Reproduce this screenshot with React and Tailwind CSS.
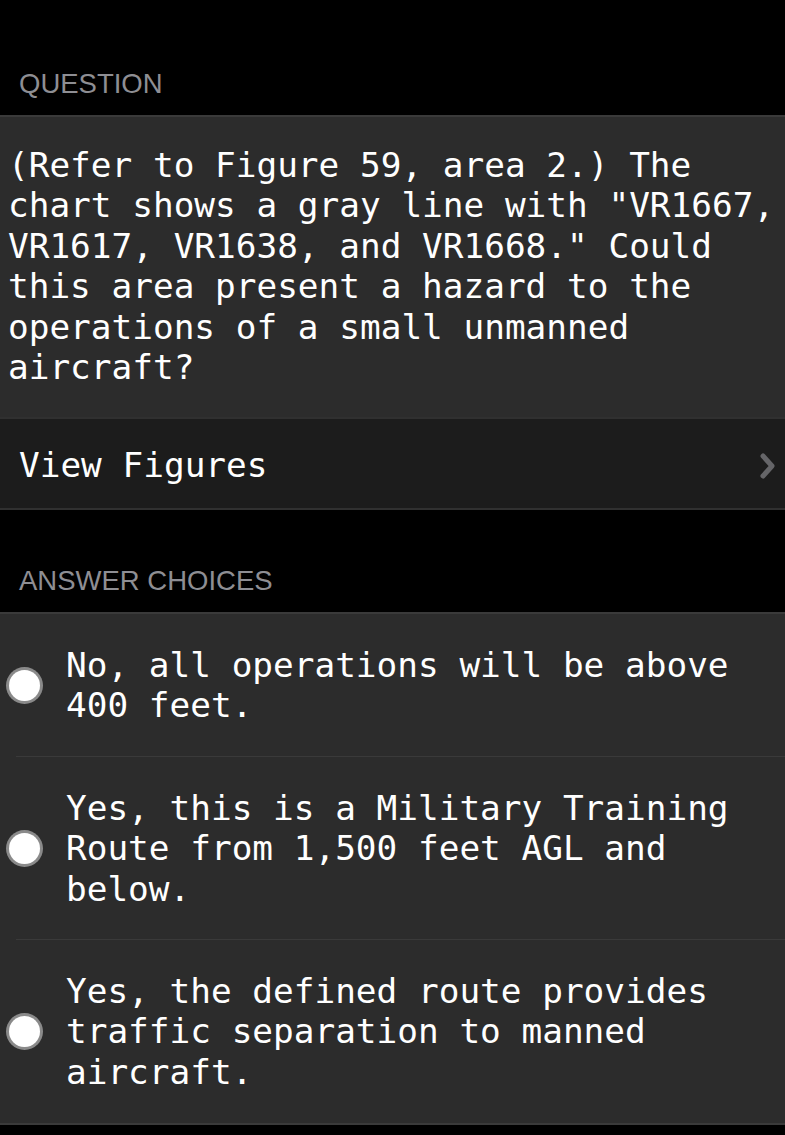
import React from 'react';

const mono = { fontFamily: '"DejaVu Sans Mono", "Liberation Mono", monospace' };

const answers = [
  'No, all operations will be above 400 feet.',
  'Yes, this is a Military Training Route from 1,500 feet AGL and below.',
  'Yes, the defined route provides traffic separation to manned aircraft.',
];

const SectionHeader = ({ children, className = '' }) => (
  <div
    className={`px-[19px] pb-[16px] text-[27.5px] leading-[31px] text-[#8e8e93] ${className}`}
    style={{ fontFamily: '"Liberation Sans", Arial, sans-serif' }}
  >
    {children}
  </div>
);

const Radio = () => (
  <span className="flex h-[37px] w-[37px] shrink-0 items-center justify-center rounded-full bg-[#8a8a8a]">
    <span className="h-[31px] w-[31px] rounded-full bg-white" />
  </span>
);

const AnswerRow = ({ text, last }) => (
  <div>
    <div className="flex items-center py-[30.5px] pl-[6px] pr-4">
      <Radio />
      <p className="ml-[23px] text-[34.4px] leading-[40.4px] text-white" style={mono}>
        {text}
      </p>
    </div>
    {!last && <div className="ml-4 h-px bg-[#3a3a3a]" />}
  </div>
);

export default function App() {
  return (
    <div className="min-h-[1135px] w-full bg-black">
      <SectionHeader className="pt-[68px]">QUESTION</SectionHeader>

      <div className="border-t-2 border-[#3a3a3a] bg-[#2c2c2c] pb-[30px] pl-2 pr-1 pt-[28px]">
        <p className="text-[34.4px] leading-[40.4px] text-white" style={mono}>
          (Refer to Figure 59, area 2.) The chart shows a gray line with "VR1667, VR1617, VR1638, and
          VR1668." Could this area present a hazard to the operations of a small unmanned aircraft?
        </p>
      </div>

      <div className="flex h-[93px] items-center justify-between border-y-2 border-[#303030] bg-[#1c1c1c] pl-[19px] pr-[9px] pt-[4px]">
        <span className="text-[34.4px] text-white" style={mono}>
          View Figures
        </span>
        <svg width="17" height="28" viewBox="0 0 17 28" fill="none">
          <path d="M4 4l9 10-9 10" stroke="#656568" strokeWidth="5" strokeLinecap="round" strokeLinejoin="round" />
        </svg>
      </div>

      <SectionHeader className="pt-[55px]">ANSWER CHOICES</SectionHeader>

      <div className="border-y-2 border-[#3a3a3a] bg-[#2c2c2c]">
        {answers.map((a, i) => (
          <AnswerRow key={i} text={a} last={i === answers.length - 1} />
        ))}
      </div>
    </div>
  );
}
